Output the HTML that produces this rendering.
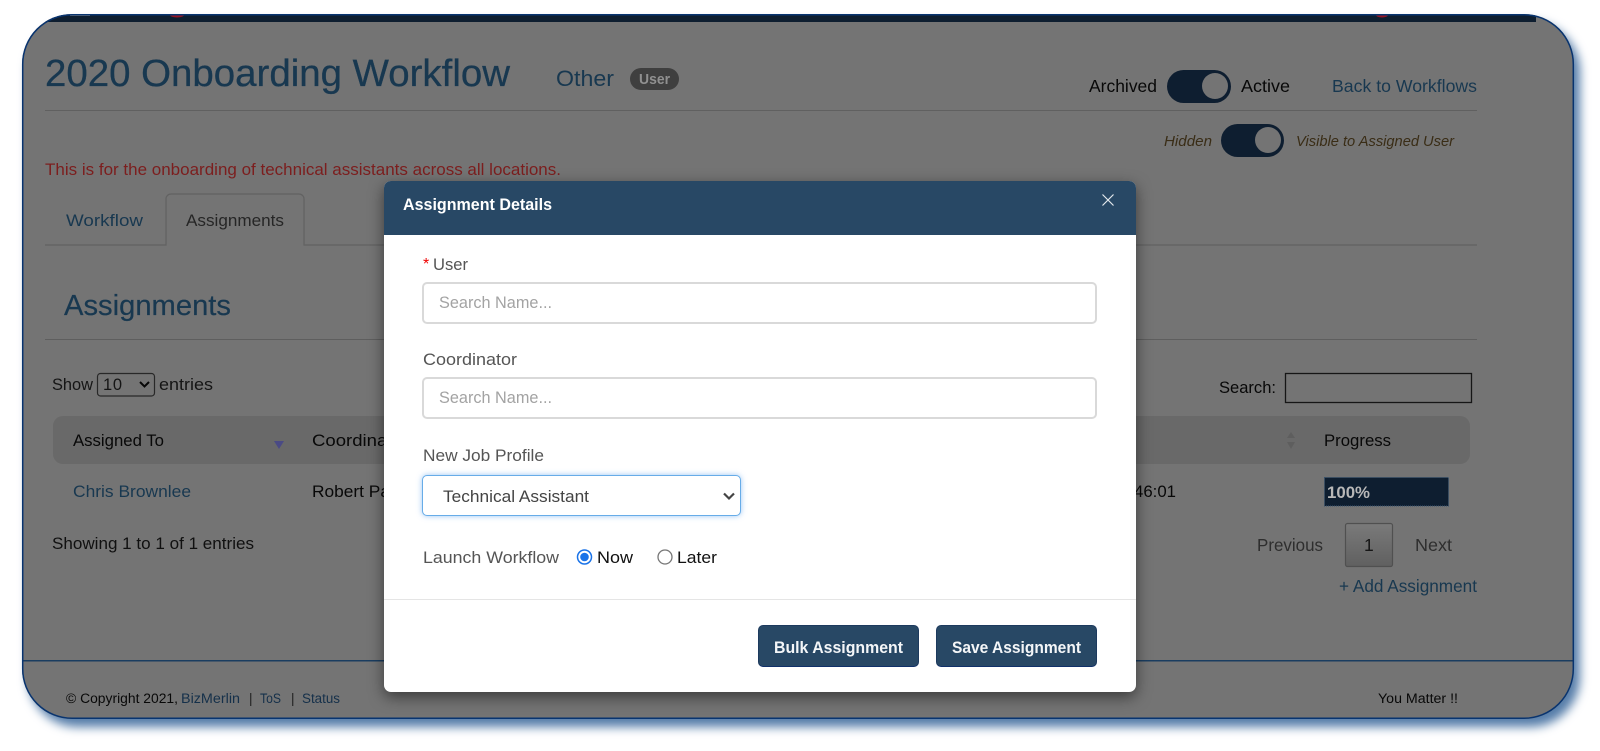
<!DOCTYPE html>
<html><head><meta charset="utf-8"><title>Assignment Details</title>
<style>
html,body{margin:0;padding:0;background:#fff;width:1600px;height:751px;overflow:hidden}
.a{position:absolute;box-sizing:border-box}
svg{position:absolute;left:0;top:0;width:1600px;height:751px;overflow:visible}
text{font-family:"Liberation Sans",sans-serif;white-space:pre}
</style></head><body>
<div class="a" id="frame" style="left:22px;top:14px;width:1552px;height:705px;border-radius:50px;background:#747474;box-shadow:6px 8px 10px #567da9"></div>
<svg viewBox="0 0 1600 751">
<defs><clipPath id="fc"><rect x="22" y="14" width="1552" height="705" rx="50"/></clipPath>
<linearGradient id="pg" x1="0" y1="0" x2="0" y2="1"><stop offset="0" stop-color="#7a7a7a"/><stop offset="1" stop-color="#606060"/></linearGradient></defs>
<g clip-path="url(#fc)">
<rect x="22" y="15" width="1514" height="7" fill="#0e1e30"/>
<rect x="70" y="15" width="20" height="1" fill="#7c7c7c"/>
<ellipse cx="177" cy="15" rx="7" ry="2.5" fill="#961424"/>
<ellipse cx="1382" cy="15" rx="6" ry="2.5" fill="#961424"/>
<rect x="22" y="660" width="1552" height="1.5" fill="#1a3d60"/>
</g>
<rect x="22.7" y="14.7" width="1550.6" height="703.6" rx="49.5" fill="none" stroke="#083470" stroke-width="1.5"/>

<text x="45" y="86" font-size="38" fill="#183850" stroke="#183850" stroke-width=".3" textLength="465" lengthAdjust="spacingAndGlyphs">2020 Onboarding Workflow</text>
<text x="556" y="86" font-size="22" fill="#183850" textLength="58" lengthAdjust="spacingAndGlyphs">Other</text>
<rect x="630" y="68" width="49" height="22" rx="11" fill="#3f3f3f"/>
<text x="639" y="84" font-size="14.5" font-weight="bold" fill="#909090" textLength="31" lengthAdjust="spacingAndGlyphs">User</text>

<text x="1089" y="92" font-size="17.5" fill="#080808" textLength="68" lengthAdjust="spacingAndGlyphs">Archived</text>
<rect x="1167" y="70" width="64" height="33" rx="16.5" fill="#0e1e30"/>
<circle cx="1215" cy="86" r="13" fill="#747474"/>
<text x="1241" y="92" font-size="17.5" fill="#080808" textLength="49" lengthAdjust="spacingAndGlyphs">Active</text>
<text x="1332" y="92" font-size="17.5" fill="#183850" textLength="145" lengthAdjust="spacingAndGlyphs">Back to Workflows</text>
<rect x="45" y="110" width="1432" height="1" fill="#606060"/>
<text x="1164" y="146" font-size="15" font-style="italic" fill="#3a2d16" textLength="48" lengthAdjust="spacingAndGlyphs">Hidden</text>
<rect x="1221" y="124" width="63" height="33" rx="16.5" fill="#0e1e30"/>
<circle cx="1268" cy="140" r="13" fill="#747474"/>
<text x="1296" y="146" font-size="15" font-style="italic" fill="#3a2d16" textLength="158" lengthAdjust="spacingAndGlyphs">Visible to Assigned User</text>

<text x="45" y="175" font-size="17" fill="#7c1e1e" textLength="516" lengthAdjust="spacingAndGlyphs">This is for the onboarding of technical assistants across all locations.</text>

<path d="M45 245H166V199a5 5 0 0 1 5-5H299a5 5 0 0 1 5 5V245H1477" fill="none" stroke="#626262" stroke-width="1.2"/>
<text x="66" y="226" font-size="17" fill="#183850" textLength="77" lengthAdjust="spacingAndGlyphs">Workflow</text>
<text x="186" y="226" font-size="17" fill="#262626" textLength="98" lengthAdjust="spacingAndGlyphs">Assignments</text>
<text x="64" y="315" font-size="29" fill="#183850" stroke="#183850" stroke-width=".2" textLength="167" lengthAdjust="spacingAndGlyphs">Assignments</text>
<rect x="45" y="339" width="1432" height="1" fill="#5e5e5e"/>

<text x="52" y="390" font-size="17" fill="#151515" textLength="41" lengthAdjust="spacingAndGlyphs">Show</text>
<rect x="97.5" y="373.5" width="57" height="22.5" rx="3" fill="none" stroke="#282828" stroke-width="1.2"/>
<text x="103" y="390" font-size="16.5" fill="#151515" textLength="19">10</text>
<path d="M140 382l4.500 4.500 4.500-4.500" fill="none" stroke="#080808" stroke-width="2"/>
<text x="159" y="390" font-size="17" fill="#151515" textLength="54" lengthAdjust="spacingAndGlyphs">entries</text>
<text x="1219" y="393" font-size="17" fill="#080808" textLength="57" lengthAdjust="spacingAndGlyphs">Search:</text>
<rect x="1285.5" y="373.5" width="186" height="29" fill="none" stroke="#161616" stroke-width="1.3"/>

<rect x="53" y="416" width="1417" height="48" rx="10" fill="#696969"/>
<text x="73" y="446" font-size="17" fill="#080808" textLength="91" lengthAdjust="spacingAndGlyphs">Assigned To</text>
<path d="M274 441h10l-5 8z" fill="#4a4a85"/>
<text x="312" y="446" font-size="17" fill="#080808" textLength="97" lengthAdjust="spacingAndGlyphs">Coordinator</text>
<path d="M1291 432l4 6h-8zM1291 449l4-7h-8z" fill="#5e5e5e"/>
<text x="1324" y="446" font-size="17" fill="#080808" textLength="67" lengthAdjust="spacingAndGlyphs">Progress</text>

<text x="73" y="497" font-size="17" fill="#183850" textLength="118" lengthAdjust="spacingAndGlyphs">Chris Brownlee</text>
<text x="312" y="497" font-size="17" fill="#080808" textLength="78" lengthAdjust="spacingAndGlyphs">Robert Pa</text>
<text x="1134" y="497" font-size="17" fill="#080808" textLength="42" lengthAdjust="spacingAndGlyphs">46:01</text>
<rect x="1324.5" y="477.5" width="124" height="28.5" fill="#0e1e30" stroke="#355270" stroke-dasharray="1 1"/>
<text x="1327" y="498" font-size="17" font-weight="bold" fill="#b8b8b8" textLength="43" lengthAdjust="spacingAndGlyphs">100%</text>

<text x="52" y="549" font-size="17" fill="#101010" textLength="202" lengthAdjust="spacingAndGlyphs">Showing 1 to 1 of 1 entries</text>
<text x="1257" y="551" font-size="17.5" fill="#2e2e2e" textLength="66" lengthAdjust="spacingAndGlyphs">Previous</text>
<rect x="1345.5" y="523.5" width="47" height="43" rx="2" fill="url(#pg)" stroke="#505050" stroke-width="1.2"/>
<text x="1364" y="551" font-size="17.5" fill="#151515" textLength="10">1</text>
<text x="1415" y="551" font-size="17.5" fill="#2e2e2e" textLength="37" lengthAdjust="spacingAndGlyphs">Next</text>
<text x="1339" y="592" font-size="17.5" fill="#183850" textLength="138" lengthAdjust="spacingAndGlyphs">+ Add Assignment</text>

<text x="66" y="703" font-size="13.5" fill="#080808" textLength="112" lengthAdjust="spacingAndGlyphs">© Copyright 2021,</text>
<text x="181" y="703" font-size="13.5" fill="#15304a" textLength="59" lengthAdjust="spacingAndGlyphs">BizMerlin</text>
<text x="249" y="703" font-size="13.5" fill="#1e1e1e">|</text>
<text x="260" y="703" font-size="13.5" fill="#15304a" textLength="21" lengthAdjust="spacingAndGlyphs">ToS</text>
<text x="291" y="703" font-size="13.5" fill="#1e1e1e">|</text>
<text x="302" y="703" font-size="13.5" fill="#15304a" textLength="38" lengthAdjust="spacingAndGlyphs">Status</text>
<text x="1378" y="703" font-size="13.5" fill="#080808" textLength="80" lengthAdjust="spacingAndGlyphs">You Matter !!</text>
</svg>

<div class="a" style="left:384px;top:181px;width:752px;height:511px;background:#fff;border-radius:7px;box-shadow:0 5px 15px rgba(0,0,0,.5)"></div>
<div class="a" style="left:384px;top:181px;width:752px;height:54px;background:#284865;border-radius:7px 7px 0 0"></div>
<div class="a" style="left:422px;top:282px;width:675px;height:42px;border:2px solid #d9d9d9;border-radius:5px"></div>
<div class="a" style="left:422px;top:377px;width:675px;height:42px;border:2px solid #d9d9d9;border-radius:5px"></div>
<div class="a" style="left:422px;top:475px;width:319px;height:41px;background:#fff;border:1.5px solid #67ace8;border-radius:5px;box-shadow:0 0 6px rgba(70,150,235,.55)"></div>
<div class="a" style="left:384px;top:599px;width:752px;height:1px;background:#e5e5e5"></div>
<div class="a" style="left:758px;top:625px;width:161px;height:42px;background:#284865;border:1px solid #1d3a5e;border-bottom-color:#10306a;border-radius:5px"></div>
<div class="a" style="left:936px;top:625px;width:161px;height:42px;background:#284865;border:1px solid #1d3a5e;border-bottom-color:#10306a;border-radius:5px"></div>

<svg viewBox="0 0 1600 751">
<text x="403" y="210" font-size="17" font-weight="bold" fill="#fff" textLength="149" lengthAdjust="spacingAndGlyphs">Assignment Details</text>
<path d="M1102.5 194.5l11 11M1113.5 194.5l-11 11" stroke="#e4e8ec" stroke-width="1.2" fill="none"/>
<text x="423" y="269" font-size="16" fill="#f00000">*</text>
<text x="433" y="270" font-size="17" fill="#555" textLength="35" lengthAdjust="spacingAndGlyphs">User</text>
<text x="439" y="308" font-size="17" fill="#a3a3a3" textLength="113" lengthAdjust="spacingAndGlyphs">Search Name...</text>
<text x="423" y="365" font-size="17" fill="#555" textLength="94" lengthAdjust="spacingAndGlyphs">Coordinator</text>
<text x="439" y="403" font-size="17" fill="#a3a3a3" textLength="113" lengthAdjust="spacingAndGlyphs">Search Name...</text>
<text x="423" y="461" font-size="17" fill="#555" textLength="121" lengthAdjust="spacingAndGlyphs">New Job Profile</text>
<text x="443" y="502" font-size="17" fill="#444" textLength="146" lengthAdjust="spacingAndGlyphs">Technical Assistant</text>
<path d="M724 493.5l5 5 5-5" fill="none" stroke="#444" stroke-width="2.2"/>
<text x="423" y="563" font-size="17" fill="#555" textLength="136" lengthAdjust="spacingAndGlyphs">Launch Workflow</text>
<circle cx="584.5" cy="557" r="7" fill="#fff" stroke="#1a73e8" stroke-width="1.5"/>
<circle cx="584.5" cy="557" r="4.3" fill="#1a73e8"/>
<text x="597" y="563" font-size="17" fill="#111" textLength="36" lengthAdjust="spacingAndGlyphs">Now</text>
<circle cx="665" cy="557" r="7" fill="#fff" stroke="#767676" stroke-width="1.3"/>
<text x="677" y="563" font-size="17" fill="#111" textLength="40" lengthAdjust="spacingAndGlyphs">Later</text>
<text x="774" y="653" font-size="17" font-weight="bold" fill="#f4f6f8" textLength="129" lengthAdjust="spacingAndGlyphs">Bulk Assignment</text>
<text x="952" y="653" font-size="17" font-weight="bold" fill="#f4f6f8" textLength="129" lengthAdjust="spacingAndGlyphs">Save Assignment</text>
</svg>
</body></html>
